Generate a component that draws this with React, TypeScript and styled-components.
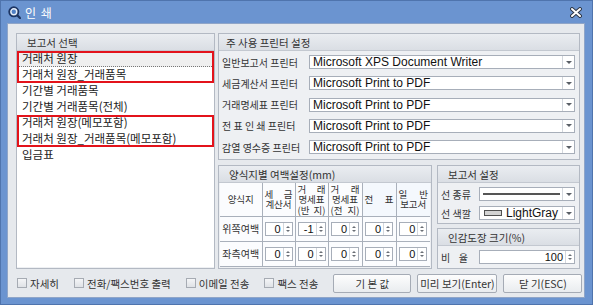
import styled, { createGlobalStyle } from "styled-components";

const GlobalStyle = createGlobalStyle`
  html, body {
    margin: 0;
    padding: 0;
  }
  body {
    font-family: "Noto Sans CJK KR", "Noto Sans", sans-serif;
    overflow: hidden;
  }
  * {
    box-sizing: border-box;
  }
`;

const reports = [
  "거래처 원장",
  "거래처 원장_거래품목",
  "기간별 거래품목",
  "기간별 거래품목(전체)",
  "거래처 원장(메모포함)",
  "거래처 원장_거래품목(메모포함)",
  "입금표",
];

const printers = [
  { label: "일반보고서 프린터", value: "Microsoft XPS Document Writer" },
  { label: "세금계산서 프린터", value: "Microsoft Print to PDF" },
  { label: "거래명세표 프린터", value: "Microsoft Print to PDF" },
  { label: "전 표 인 쇄 프린터", value: "Microsoft Print to PDF" },
  { label: "감열 영수증 프린터", value: "Microsoft Print to PDF" },
];

const margins = [
  { label: "위쪽여백", values: ["0", "-1", "0", "0", "0"] },
  { label: "좌측여백", values: ["0", "0", "0", "0", "0"] },
];

const options = ["자세히", "전화/팩스번호 출력", "이메일 전송", "팩스 전송"];

const TitleIcon = () => (
  <svg width="13" height="13" viewBox="0 0 13 13">
    <line x1="8.5" y1="8.5" x2="12" y2="12" stroke="#1d3563" strokeWidth="2.4" strokeLinecap="round" />
    <circle cx="5.8" cy="5.8" r="4.6" fill="#e6eef9" stroke="#1d3563" strokeWidth="1.8" />
    <circle cx="5.8" cy="5.8" r="2.2" fill="#4f7fc4" />
  </svg>
);

const CloseIcon = () => (
  <svg width="12" height="11" viewBox="0 0 12 11">
    <path d="M2 2 L10 9 M10 2 L2 9" stroke="#2b3340" strokeWidth="3.8" strokeLinecap="round" />
    <path d="M2 2 L10 9 M10 2 L2 9" stroke="#ffffff" strokeWidth="2" strokeLinecap="round" />
  </svg>
);

const App = () => {
  return (
    <>
      <GlobalStyle />
      <Window>
        <TitleBar>
          <TitleIcon />
          <Title>인 쇄</Title>
          <Close>
            <CloseIcon />
          </Close>
        </TitleBar>
        <Body>
          <Main>
            <Panel>
              <PanelHeader>보고서 선택</PanelHeader>
              <List>
                <Highlight>
                  <Item $selected>{reports[0]}</Item>
                  <Item>{reports[1]}</Item>
                </Highlight>
                <Item>{reports[2]}</Item>
                <Item>{reports[3]}</Item>
                <Highlight>
                  <Item>{reports[4]}</Item>
                  <Item>{reports[5]}</Item>
                </Highlight>
                <Item>{reports[6]}</Item>
              </List>
            </Panel>

            <RightColumn>
              <Panel $h={127}>
                <PanelHeader $indent={7}>주 사용 프린터 설정</PanelHeader>
                <PrinterRows>
                  {printers.map((p) => (
                    <PrinterRow key={p.label}>
                      <PrinterLabel>{p.label}</PrinterLabel>
                      <Combo>
                        <ComboText>{p.value}</ComboText>
                        <ComboButton />
                      </Combo>
                    </PrinterRow>
                  ))}
                </PrinterRows>
              </Panel>

              <LowerRow>
                <Panel>
                  <PanelHeader>양식지별 여백설정(mm)</PanelHeader>
                  <MarginTable>
                    <colgroup>
                      <Col $w={42} />
                      <Col $w={33} />
                      <Col $w={33} />
                      <Col $w={34} />
                      <Col $w={34} />
                      <Col $w={34} />
                    </colgroup>
                    <tbody>
                      <HeadRow>
                        <HeadCell>양식지</HeadCell>
                        <HeadCell>
                          <Spread>세 금</Spread>
                          <div>계산서</div>
                        </HeadCell>
                        <HeadCell>
                          <Spread>거 래</Spread>
                          <div>명세표</div>
                          <Spread>(반 지)</Spread>
                        </HeadCell>
                        <HeadCell>
                          <Spread>거 래</Spread>
                          <div>명세표</div>
                          <Spread>(전 지)</Spread>
                        </HeadCell>
                        <HeadCell $tint>
                          <Spread>전 표</Spread>
                        </HeadCell>
                        <HeadCell $tint>
                          <Spread>일 반</Spread>
                          <div>보고서</div>
                        </HeadCell>
                      </HeadRow>
                      {margins.map((row) => (
                        <DataRow key={row.label}>
                          <RowLabel>{row.label}</RowLabel>
                          {row.values.map((v, i) => (
                            <DataCell key={i}>
                              <Spin $w={28}>
                                <SpinValue>{v}</SpinValue>
                                <SpinArrows />
                              </Spin>
                            </DataCell>
                          ))}
                        </DataRow>
                      ))}
                    </tbody>
                  </MarginTable>
                </Panel>

                <SideColumn>
                  <Panel $h={59}>
                    <PanelHeader>보고서 설정</PanelHeader>
                    <SettingRows>
                      <SettingRow>
                        <SettingLabel>선 종류</SettingLabel>
                        <Combo>
                          <ComboText>
                            <LineSample />
                          </ComboText>
                          <ComboButton />
                        </Combo>
                      </SettingRow>
                      <SettingRow>
                        <SettingLabel>선 색깔</SettingLabel>
                        <Combo>
                          <ComboText>
                            <Swatch $color="#d3d3d3" />
                            LightGray
                          </ComboText>
                          <ComboButton />
                        </Combo>
                      </SettingRow>
                    </SettingRows>
                  </Panel>
                  <Panel>
                    <PanelHeader>인감도장 크기(%)</PanelHeader>
                    <SettingRows>
                      <SettingRow>
                        <SettingLabel $spread>비 율</SettingLabel>
                        <Spin $grow>
                          <SpinValue>100</SpinValue>
                          <SpinArrows />
                        </Spin>
                      </SettingRow>
                    </SettingRows>
                  </Panel>
                </SideColumn>
              </LowerRow>
            </RightColumn>
          </Main>

          <BottomBar>
            {options.map((o) => (
              <Check key={o}>
                <CheckBox />
                {o}
              </Check>
            ))}
            <Buttons>
              <Button $w={78}>기 본 값</Button>
              <Button $w={80}>미리 보기(Enter)</Button>
              <Button $w={79}>닫 기(ESC)</Button>
            </Buttons>
          </BottomBar>
        </Body>
      </Window>
    </>
  );
};

export default App;

const Window = styled.div`
  width: 593px;
  height: 305px;
  background: #6b94d0;
  border: 1px solid #4f74ad;
  padding: 0 7px 6px 6px;
  display: flex;
  flex-direction: column;
`;

const TitleBar = styled.div`
  height: 22px;
  flex: none;
  display: flex;
  align-items: center;
  gap: 4px;
  padding-left: 1px;
  color: #fff;
`;

const Title = styled.div`
  font-size: 12px;
  letter-spacing: 1px;
`;

const Close = styled.div`
  margin-left: auto;
  margin-right: 3px;
  display: flex;
  align-items: center;
`;

const Body = styled.div`
  flex: 1;
  background: #e6e9ed;
  border: 1px solid #8fa5c8;
  padding: 9px 4px 0 8px;
  display: flex;
  flex-direction: column;
`;

const Main = styled.div`
  height: 236px;
  display: grid;
  grid-template-columns: 199px 1fr;
  column-gap: 3px;
`;

const RightColumn = styled.div`
  display: flex;
  flex-direction: column;
  gap: 5px;
  min-height: 0;
`;

const LowerRow = styled.div`
  flex: 1;
  display: grid;
  grid-template-columns: 214px 1fr;
  column-gap: 5px;
  min-height: 0;
`;

const SideColumn = styled.div`
  display: flex;
  flex-direction: column;
  gap: 4px;
`;

const Panel = styled.section<{ $h?: number }>`
  ${(p) => (p.$h ? `height: ${p.$h}px; flex: none;` : "flex: 1;")}
  border: 1px solid #b3b9c3;
  background: #eef0f3;
  display: flex;
  flex-direction: column;
  min-height: 0;
`;

const PanelHeader = styled.div<{ $indent?: number }>`
  height: 17px;
  flex: none;
  background: linear-gradient(#eaedf1, #dadee4);
  border-bottom: 1px solid #c3c8d0;
  padding-left: ${(p) => p.$indent ?? 10}px;
  display: flex;
  align-items: center;
  font-size: 10.5px;
  color: #333;
  white-space: nowrap;
`;

const List = styled.div`
  flex: 1;
  background: #fff;
  margin: 0 0 1px 0;
`;

const Highlight = styled.div`
  position: relative;

  &::after {
    content: "";
    position: absolute;
    inset: 0 0 0 0;
    border: 2px solid #e3131b;
    pointer-events: none;
  }
`;

const Item = styled.div<{ $selected?: boolean }>`
  height: 16px;
  padding: 0 0 3px 5px;
  display: flex;
  align-items: center;
  font-size: 11.5px;
  color: #1c1c1c;
  white-space: nowrap;
  ${(p) =>
    p.$selected &&
    `
    background: #efefef;
    outline: 1px dotted #777;
    outline-offset: -1px;
  `}
`;

const PrinterRows = styled.div`
  display: flex;
  flex-direction: column;
  gap: 7.3px;
  padding: 4px 4px 0 3px;
`;

const PrinterRow = styled.div`
  height: 14px;
  display: flex;
  align-items: center;
`;

const PrinterLabel = styled.div`
  width: 87px;
  flex: none;
  font-size: 10px;
  color: #333;
  white-space: nowrap;
`;

const Combo = styled.div`
  flex: 1;
  height: 14px;
  background: #fff;
  border: 1px solid #a7aeb9;
  display: flex;
  align-items: center;
  min-width: 0;
`;

const ComboText = styled.div`
  flex: 1;
  min-width: 0;
  padding: 0 2px 0 3px;
  display: flex;
  align-items: center;
  gap: 4px;
  font-family: "Liberation Sans Narrow", "Liberation Sans", Arial, sans-serif;
  font-size: 12px;
  color: #111;
  white-space: nowrap;
  overflow: hidden;
`;

const ComboButton = styled.div`
  width: 12px;
  align-self: stretch;
  border-left: 1px solid #d3d7dd;
  display: flex;
  align-items: center;
  justify-content: center;

  &::before {
    content: "";
    border-left: 3px solid transparent;
    border-right: 3px solid transparent;
    border-top: 3px solid #5a5f66;
  }
`;

const LineSample = styled.div`
  flex: 1;
  height: 2px;
  background: #555;
`;

const Swatch = styled.div<{ $color: string }>`
  width: 18px;
  height: 6px;
  flex: none;
  background: ${(p) => p.$color};
  border: 1px solid #505050;
  margin-left: 1px;
`;

const MarginTable = styled.table`
  border-collapse: collapse;
  table-layout: fixed;
  width: calc(100% - 2px);
  margin: 0 1px;
  background: #fbfcfe;
  font-size: 10px;
  color: #333;

  td {
    border: 1px solid #a9b0bb;
    padding: 0;
  }
  tr > td:first-child {
    border-left: none;
  }
  tr > td:last-child {
    border-right: none;
  }
  tr:first-child > td {
    border-top: none;
  }
`;

const Col = styled.col<{ $w: number }>`
  width: ${(p) => p.$w}px;
`;

const HeadRow = styled.tr`
  height: 33px;
`;

const HeadCell = styled.td<{ $tint?: boolean }>`
  text-align: center;
  vertical-align: middle;
  font-size: 9.5px;
  line-height: 10.5px;
  padding: 0 2px !important;
  white-space: nowrap;
  background: ${(p) => (p.$tint ? "#f4f8fd" : "transparent")};
`;

const Spread = styled.div`
  text-align: justify;
  text-align-last: justify;
`;

const DataRow = styled.tr`
  height: 25px;
`;

const RowLabel = styled.td`
  text-align: center;
  vertical-align: middle;
  white-space: nowrap;
`;

const DataCell = styled.td`
  vertical-align: middle;
`;

const Spin = styled.div<{ $w?: number; $grow?: boolean }>`
  ${(p) => (p.$grow ? "flex: 1;" : `width: ${p.$w}px; margin: 0 auto;`)}
  height: 14px;
  background: #fff;
  border: 1px solid #a7aeb9;
  display: flex;
  align-items: center;
`;

const SpinValue = styled.div`
  flex: 1;
  text-align: right;
  padding-right: 2px;
  font-family: "Liberation Sans", Arial, sans-serif;
  font-size: 11px;
  color: #111;
`;

const SpinArrows = styled.div`
  width: 9px;
  align-self: stretch;
  border-left: 1px solid #d3d7dd;
  display: flex;
  flex-direction: column;
  align-items: center;
  justify-content: center;
  gap: 2px;

  &::before,
  &::after {
    content: "";
    border-left: 2px solid transparent;
    border-right: 2px solid transparent;
  }
  &::before {
    border-bottom: 2px solid #6a6f76;
  }
  &::after {
    border-top: 2px solid #6a6f76;
  }
`;

const SettingRows = styled.div`
  display: flex;
  flex-direction: column;
  gap: 5px;
  padding: 4px 4px 0 3px;
`;

const SettingRow = styled.div`
  height: 14px;
  display: flex;
  align-items: center;
  gap: 11px;
`;

const SettingLabel = styled.div<{ $spread?: boolean }>`
  width: 27px;
  flex: none;
  font-size: 10px;
  color: #333;
  white-space: nowrap;
  ${(p) => p.$spread && "text-align: justify; text-align-last: justify;"}
`;

const BottomBar = styled.div`
  flex: 1;
  display: flex;
  align-items: center;
  gap: 15px;
  padding-left: 1px;
`;

const Check = styled.label`
  display: flex;
  align-items: center;
  gap: 3px;
  font-size: 10.5px;
  color: #333;
  white-space: nowrap;
`;

const CheckBox = styled.span`
  width: 10px;
  height: 10px;
  border: 1px solid #a6abb3;
  background: linear-gradient(#f4f5f7, #dfe2e6);
`;

const Buttons = styled.div`
  margin-left: auto;
  display: flex;
  gap: 6px;
`;

const Button = styled.button<{ $w: number }>`
  width: ${(p) => p.$w}px;
  height: 19px;
  padding: 0;
  border: 1px solid #a5abb5;
  border-radius: 2px;
  background: linear-gradient(#fdfdfd, #e9ecef);
  font-family: "Noto Sans CJK KR", sans-serif;
  font-size: 10.5px;
  color: #333;
  white-space: nowrap;
`;
